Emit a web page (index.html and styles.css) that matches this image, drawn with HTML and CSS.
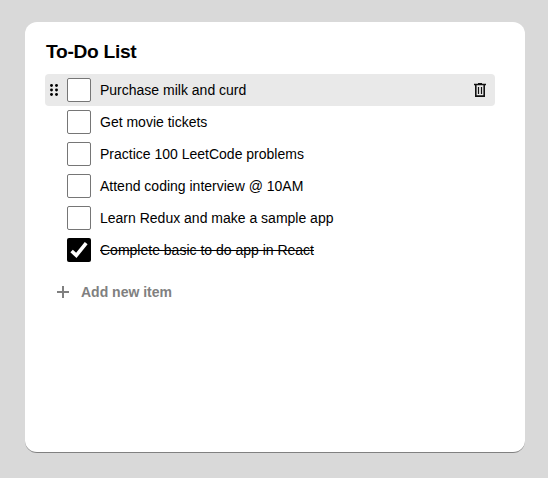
FILE: index.html
```html
<!DOCTYPE html>
<html lang="en">
<head>
<meta charset="utf-8">
<title>To-Do List</title>
<link rel="stylesheet" href="styles.css">
</head>
<body>
<main class="card">
  <h1 class="title">To-Do List</h1>
  <ul class="list">
    <li class="item active">
      <svg class="grip" viewBox="0 0 8 12"><circle cx="1.5" cy="1.5" r="1.45"/><circle cx="6.5" cy="1.5" r="1.45"/><circle cx="1.5" cy="6" r="1.45"/><circle cx="6.5" cy="6" r="1.45"/><circle cx="1.5" cy="10.5" r="1.45"/><circle cx="6.5" cy="10.5" r="1.45"/></svg>
      <span class="box"></span><span class="label">Purchase milk and curd</span>
      <svg class="trash" viewBox="0 0 12 14"><path d="M0 1.5h12M4 .6h4M1.8 2v11.1h8.4V2" fill="none" stroke="#111" stroke-width="1.6"/><path d="M4.5 4v7M7.5 4v7" stroke="#111" stroke-width="1.2"/></svg>
    </li>
    <li class="item"><span class="box"></span><span class="label">Get movie tickets</span></li>
    <li class="item"><span class="box"></span><span class="label">Practice 100 LeetCode problems</span></li>
    <li class="item"><span class="box"></span><span class="label">Attend coding interview @ 10AM</span></li>
    <li class="item"><span class="box"></span><span class="label">Learn Redux and make a sample app</span></li>
    <li class="item done"><span class="box"><svg class="check" viewBox="0 0 24 24"><path d="M4.6 13L9.3 17.4 19.2 5.2" fill="none" stroke="#fff" stroke-width="3.6"/></svg></span><span class="label">Complete basic to do app in React</span></li>
  </ul>
  <div class="add">
    <svg class="plus" viewBox="0 0 12 12"><path d="M0 6h12M6 0v12" stroke="#808080" stroke-width="2"/></svg>
    <span>Add new item</span>
  </div>
</main>
</body>
</html>
```

FILE: styles.css
```css
* { box-sizing: border-box; }
body {
  margin: 0;
  padding: 22px 23px 0 25px;
  background: #d9d9d9;
  color: #000;
  font: 14px/32px "Liberation Sans", Arial, sans-serif;
}
.card {
  width: 500px;
  height: 431px;
  padding: 18px 30px 0 20px;
  background: #fff;
  border-bottom: 1px solid #808080;
  border-radius: 12px;
}
.title {
  margin: 0 0 10px 1px;
  font-size: 19.2px;
  letter-spacing: -0.3px;
  line-height: 24px;
}
.list { margin: 0; padding: 0; list-style: none; }
.item {
  display: flex;
  align-items: center;
  height: 32px;
  padding: 0 9px 0 22px;
  border-radius: 4px;
}
.active { padding-left: 5px; background: #e9e9e9; }
.grip { width: 8px; height: 12px; margin-right: 9px; }
.box {
  width: 24px;
  height: 24px;
  margin-right: 9px;
  border: 1px solid #767676;
  border-radius: 2px;
  background: #fff;
}
.trash { width: 12px; height: 14px; margin-left: auto; }
.done .box { border: 0; background: #000; }
.done .label { text-decoration: line-through; }
.check { display: block; width: 24px; height: 24px; }
.add {
  display: flex;
  align-items: center;
  gap: 12px;
  height: 32px;
  margin-top: 10px;
  padding-left: 12px;
  color: #808080;
  font-weight: bold;
}
.plus { width: 12px; height: 12px; }
```
